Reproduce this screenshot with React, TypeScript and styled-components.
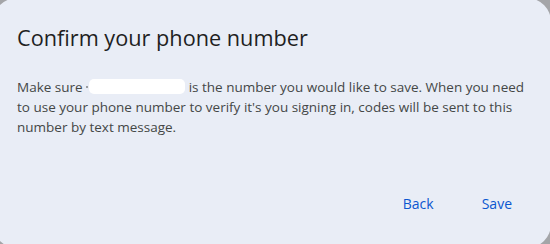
import styled, { createGlobalStyle } from "styled-components";

const GlobalStyle = createGlobalStyle`
  html, body {
    margin: 0;
    padding: 0;
    background: #a4a5a8;
    overflow: hidden;
  }
`;

export default function App() {
  return (
    <>
      <GlobalStyle />
      <Screen>
        <Dialog>
          <Title>Confirm your phone number</Title>
          <Body>
            Make sure <Dot />
            <Redacted /> is the number you would like to save. When you need
            to use your phone number to verify it's you signing in, codes will
            be sent to this number by text message.
          </Body>
          <Actions>
            <TextButton>Back</TextButton>
            <TextButton>Save</TextButton>
          </Actions>
        </Dialog>
      </Screen>
    </>
  );
}

const Screen = styled.div`
  width: 550px;
  height: 244px;
  overflow: hidden;
`;

const Dialog = styled.div`
  box-sizing: border-box;
  width: 558px;
  height: 250px;
  margin: -2px 0 0 -7px;
  padding: 24px 18px 0 24px;
  background: #e9edf6;
  border-radius: 24px;
  display: flex;
  flex-direction: column;
  font-family: "Open Sans", Roboto, sans-serif;
`;

const Title = styled.h1`
  margin: 0;
  font-size: 21.7px;
  font-weight: 400;
  line-height: 32px;
  color: #1f1f1f;
`;

const Body = styled.p`
  margin: 23px 0 0;
  font-size: 13.5px;
  line-height: 20px;
  color: #444746;
`;

const Dot = styled.span`
  display: inline-block;
  width: 2px;
  height: 2px;
  margin-right: 1px;
  vertical-align: 4px;
  background: #9a9ca0;
`;

const Redacted = styled.span`
  display: inline-block;
  width: 96px;
  height: 15px;
  vertical-align: -2px;
  background: #ffffff;
  border-radius: 5px;
`;

const Actions = styled.div`
  display: flex;
  justify-content: flex-end;
  gap: 24px;
  margin: 47px 9px 0 0;
`;

const TextButton = styled.button`
  border: none;
  background: none;
  padding: 10px 12px;
  font-family: inherit;
  font-size: 14px;
  font-weight: 500;
  color: #0b57d0;
  cursor: pointer;
`;
